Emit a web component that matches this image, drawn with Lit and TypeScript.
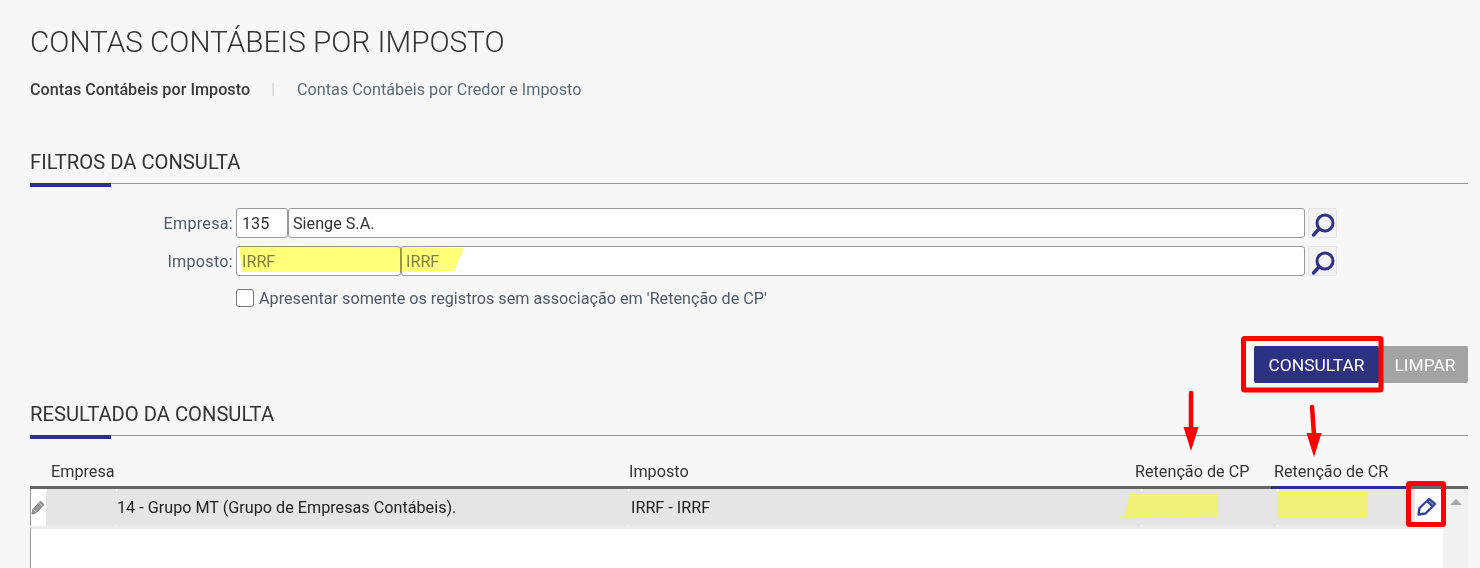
import { LitElement, css, html, svg } from 'lit';
import { customElement } from 'lit/decorators.js';

const searchIcon = html`
  <svg width="27" height="27" viewBox="0 0 27 27" fill="none" stroke="#2e3384">
    <circle cx="16" cy="13" r="8" stroke-width="3"></circle>
    <path d="M10 19 L4.5 25" stroke-width="3.4" stroke-linecap="round"></path>
  </svg>
`;

// red arrow pointing down, drawn in the overlay
const arrow = (x1: number, y1: number, x2: number, y2: number) => svg`
  <path d="M${x1} ${y1} L${x2} ${y2 - 22}" stroke="#ff0000" stroke-width="4.5" stroke-linecap="round"></path>
  <polygon points="${x2 - 7.5},${y2 - 24} ${x2 + 7.5},${y2 - 24} ${x2},${y2}" fill="#ff0000"></polygon>
`;

@customElement('app-root')
export class AppRoot extends LitElement {
	static styles = css`
    :host {
      display: block;
      position: relative;
      height: 568px;
      overflow: hidden;
      background: #f7f7f7;
      font-family: Roboto, sans-serif;
      font-size: 16.2px;
      color: #333;
    }

    .page {
      display: flex;
      flex-direction: column;
      padding: 0 12px 0 30px;
    }

    h1 {
      margin: 0;
      padding-top: 24px;
      height: 45px;
      font-size: 29.7px;
      line-height: 36px;
      font-weight: 300;
      color: #333;
    }

    .tabs {
      display: flex;
      align-items: center;
      height: 20px;
      margin-top: 10px;
    }

    .tab-active {
      font-weight: 500;
      color: #3a3a3a;
    }

    .tab-sep {
      width: 2px;
      height: 13px;
      margin: 0 23px 0 22px;
      background: #e0e0e0;
    }

    .tab-link {
      color: #5a6b78;
    }

    .section-title {
      height: 34px;
      border-bottom: 1px solid #999;
      position: relative;
      font-size: 20.2px;
      line-height: 26px;
      color: #333;
    }

    .section-title::after {
      content: '';
      position: absolute;
      left: 0;
      bottom: -4px;
      width: 81px;
      height: 4px;
      background: #2c3181;
    }

    .filters {
      margin-top: 50px;
    }

    .form {
      display: grid;
      grid-template-columns: 206px 1069px 32px;
      grid-auto-rows: 30px;
      row-gap: 8px;
      margin-top: 24px;
    }

    .label {
      display: flex;
      align-items: center;
      justify-content: flex-end;
      padding-right: 3px;
      color: #4e5a68;
      letter-spacing: 0.25px;
    }

    .fields {
      display: flex;
    }

    .input {
      box-sizing: border-box;
      display: flex;
      align-items: center;
      padding-left: 5px;
      background: #fff;
      border: 1px solid #999;
      border-radius: 3px;
      color: #333;
    }

    .code {
      width: 52px;
    }

    .code-wide {
      width: 165px;
    }

    .name {
      flex: 1;
      padding-left: 4px;
    }

    .muted {
      color: #808080;
    }

    .search {
      box-sizing: border-box;
      display: flex;
      align-items: center;
      justify-content: center;
      margin-left: 3px;
      width: 29px;
      background: #f3f3f3;
      border: 1px solid #e3e3e3;
      border-radius: 2px;
    }

    .check {
      display: flex;
      align-items: center;
      gap: 5px;
      margin: 13px 0 0 206px;
      height: 18px;
      color: #4e5a68;
    }

    .box {
      box-sizing: border-box;
      width: 18px;
      height: 18px;
      background: #fff;
      border: 1.5px solid #777;
      border-radius: 3px;
    }

    .actions {
      display: flex;
      justify-content: flex-end;
      margin-top: 39px;
      height: 37px;
    }

    .btn {
      display: flex;
      align-items: center;
      justify-content: center;
      font-size: 17.4px;
      color: #fff;
      border-radius: 2px;
    }

    .btn-primary {
      width: 125px;
      background: #2c3181;
    }

    .btn-secondary {
      box-sizing: border-box;
      width: 89px;
      padding-left: 3px;
      background: #a3a3a3;
    }

    .results {
      margin-top: 18px;
    }

    .thead,
    .row {
      display: grid;
      grid-template-columns: 16px 70px 512px 513px 136px 135px 31px 25px;
    }

    .thead {
      height: 50px;
      box-sizing: border-box;
      padding-top: 24px;
      line-height: 24px;
      color: #333;
    }

    .th-first {
      grid-column: 1 / 4;
      padding-left: 21px;
    }

    .th-imposto {
      padding-left: 1px;
    }

    .th-cp {
      margin-left: -6px;
    }

    .th-cr {
      margin-left: -3px;
    }

    .table {
      border-top: 3px solid #666;
      position: relative;
    }

    .table::before {
      content: '';
      position: absolute;
      left: 1241px;
      top: -3px;
      width: 136px;
      height: 3px;
      background: #2c3181;
    }

    .row {
      height: 37px;
      line-height: 38px;
      color: #222;
    }

    .cell {
      background-color: #e5e5e5;
      /* small white ticks at the column edges */
      background-image: linear-gradient(#fff, #fff), linear-gradient(#fff, #fff);
      background-size: 1px 2px;
      background-position: left top, left bottom;
      background-repeat: no-repeat;
    }

    .cell-empresa {
      padding-left: 1px;
    }

    .cell-imposto {
      padding-left: 3px;
    }

    .pencil {
      box-sizing: border-box;
      display: flex;
      align-items: center;
      justify-content: flex-start;
      padding-bottom: 2px;
      background: #fff;
      border-left: 1px solid #999;
    }

    .pencil svg {
      flex-shrink: 0;
    }

    .cell-edit {
      box-sizing: border-box;
      padding: 0 4px 4px 0;
      background: #fff;
      border-left: 3px solid #e5e5e5;
      display: flex;
      align-items: center;
      justify-content: center;
    }

    .scroll {
      background: #f1f1f1;
      display: flex;
      justify-content: center;
      padding-top: 10px;
      box-sizing: border-box;
    }

    .scroll i {
      width: 0;
      height: 0;
      border-left: 6px solid transparent;
      border-right: 6px solid transparent;
      border-bottom: 6px solid #a8a8a8;
    }

    .tbody-rest {
      display: grid;
      grid-template-columns: 1fr 25px;
      height: 80px;
    }

    .blank {
      background: #fff;
      border-left: 1px solid #999;
      border-top: 3px solid #ececec;
    }

    .blank-scroll {
      background: #f1f1f1;
    }

    .overlay {
      position: absolute;
      left: 0;
      top: 0;
      pointer-events: none;
    }

    .marker {
      mix-blend-mode: multiply;
    }
  `;

	render() {
		return html`
      <div class="page">
        <h1>CONTAS CONTÁBEIS POR IMPOSTO</h1>

        <div class="tabs">
          <span class="tab-active">Contas Contábeis por Imposto</span>
          <span class="tab-sep"></span>
          <span class="tab-link">Contas Contábeis por Credor e Imposto</span>
        </div>

        <div class="section-title filters">FILTROS DA CONSULTA</div>

        <div class="form">
          <div class="label">Empresa:</div>
          <div class="fields">
            <div class="input code">135</div>
            <div class="input name">Sienge S.A.</div>
          </div>
          <div class="search">${searchIcon}</div>

          <div class="label">Imposto:</div>
          <div class="fields">
            <div class="input code-wide muted">IRRF</div>
            <div class="input name muted">IRRF</div>
          </div>
          <div class="search">${searchIcon}</div>
        </div>

        <div class="check">
          <span class="box"></span>
          <span>Apresentar somente os registros sem associação em 'Retenção de CP'</span>
        </div>

        <div class="actions">
          <div class="btn btn-primary">CONSULTAR</div>
          <div class="btn btn-secondary">LIMPAR</div>
        </div>

        <div class="section-title results">RESULTADO DA CONSULTA</div>

        <div class="thead">
          <div class="th-first">Empresa</div>
          <div class="th-imposto">Imposto</div>
          <div class="th-cp">Retenção de CP</div>
          <div class="th-cr">Retenção de CR</div>
        </div>

        <div class="table">
          <div class="row">
            <div class="pencil">
              <svg width="14" height="15" viewBox="0 0 14 15">
                <path d="M1 14 L1.8 9.5 L9.5 1.2 L13 4.5 L5.2 12.8 Z" fill="#979797" stroke="#7a7a7a"></path>
                <path d="M2.5 9.5 L5.5 12.3 M8.2 3 L11.4 6" stroke="#d4d4d4" fill="none"></path>
              </svg>
            </div>
            <div class="cell"></div>
            <div class="cell cell-empresa">14 - Grupo MT (Grupo de Empresas Contábeis).</div>
            <div class="cell cell-imposto">IRRF - IRRF</div>
            <div class="cell"></div>
            <div class="cell"></div>
            <div class="cell-edit">
              <svg width="22" height="22" viewBox="0 0 22 22" fill="none" stroke="#3442a0" stroke-width="2.4" stroke-linejoin="round">
                <path d="M2.5 19.5 L3.5 13 L13 4 L19 9 L9.5 18.5 Z"></path>
                <path d="M11 6 L16.5 11"></path>
              </svg>
            </div>
            <div class="scroll"><i></i></div>
          </div>
          <div class="tbody-rest">
            <div class="blank"></div>
            <div class="blank-scroll"></div>
          </div>
        </div>
      </div>

      <svg class="overlay" width="1480" height="568">
        <polygon class="marker" points="239,246 402,247 402,272 242,272" fill="#ffff78"></polygon>
        <polygon class="marker" points="402,247 464,248 454,271 402,272" fill="#ffff78"></polygon>
        <polygon points="1130,493 1218,493 1218,518 1124,517" fill="#f2f27a"></polygon>
        <rect x="1277" y="492" width="91" height="25" fill="#f2f27a"></rect>

        <rect x="1243.5" y="338.5" width="137.5" height="51.5" rx="1" fill="none" stroke="#ff0000" stroke-width="5"></rect>
        <rect x="1408.5" y="483.5" width="35" height="41" rx="1" fill="none" stroke="#ff0000" stroke-width="5"></rect>

        ${arrow(1191, 393, 1191, 451)}
        ${arrow(1312, 407, 1314, 457)}
      </svg>
    `;
	}
}
